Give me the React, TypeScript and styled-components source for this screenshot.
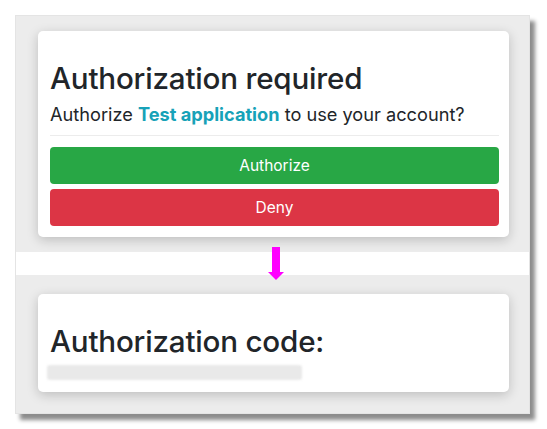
import React from "react";
import styled, { createGlobalStyle } from "styled-components";

const Global = createGlobalStyle`
  html, body { margin: 0; padding: 0; background: #ffffff; }
  body { font-family: Inter, "Noto Sans", "Liberation Sans", sans-serif; color: #212529; }
  * { box-sizing: border-box; }
`;

const Page = styled.div`
  width: 547px;
  height: 429px;
  padding: 15px 0 0 15px;
`;

const Frame = styled.div`
  width: 515px;
  height: 399px;
  border: 1px solid #e4e4e4;
  background: #ffffff;
  box-shadow: 5px 6px 4px rgba(0, 0, 0, 0.45);
  display: flex;
  flex-direction: column;
`;

const Panel = styled.div<{ $h: number; $pt: number }>`
  height: ${(p) => p.$h}px;
  background: #ececec;
  padding: ${(p) => p.$pt}px 20px 0 22px;
`;

const Card = styled.div`
  background: #ffffff;
  border-radius: 5px;
  box-shadow: 0 3px 12px rgba(0, 0, 0, 0.2);
  padding: 12px 10px 11px 12px;
  display: flex;
  flex-direction: column;
`;

const Heading = styled.h1<{ $mt: number }>`
  margin: ${(p) => p.$mt}px 0 0 0;
  font-size: 29.6px;
  font-weight: 500;
  line-height: 36px;
  letter-spacing: -0.2px;
  color: #212529;
`;

const Lead = styled.p`
  margin: 6px 0 0 0;
  font-size: 18.2px;
  line-height: 24px;
  color: #212529;
`;

const AppName = styled.span`
  color: #17a2b8;
  font-weight: 700;
`;

const Rule = styled.hr`
  margin: 9px 0 11px 0;
  border: 0;
  border-top: 1px solid #ececec;
`;

const Buttons = styled.div`
  display: flex;
  flex-direction: column;
  gap: 5px;
`;

const Button = styled.button<{ $bg: string }>`
  height: 37px;
  border: 0;
  border-radius: 4px;
  background: ${(p) => p.$bg};
  color: #ffffff;
  font-family: inherit;
  font-size: 15.5px;
  font-weight: 400;
  cursor: pointer;
`;

const Strip = styled.div`
  position: relative;
  height: 23px;
  background: #ffffff;
`;

const Arrow = styled.svg`
  position: absolute;
  left: 252px;
  top: -5px;
  z-index: 2;
`;

const CodeBar = styled.div`
  margin: 6px 0 1px -3px;
  width: 255px;
  height: 15px;
  background: #e9e9e9;
  border-radius: 3px;
  filter: blur(1.2px);
`;

export default function App() {
  return (
    <>
      <Global />
      <Page>
        <Frame>
          <Panel $h={236} $pt={15}>
            <Card>
              <Heading $mt={17}>Authorization required</Heading>
              <Lead>
                Authorize <AppName>Test application</AppName> to use your account?
              </Lead>
              <Rule />
              <Buttons>
                <Button $bg="#28a745">Authorize</Button>
                <Button $bg="#dc3545">Deny</Button>
              </Buttons>
            </Card>
          </Panel>
          <Strip>
            <Arrow width="16" height="33" viewBox="0 0 16 33">
              <polygon points="4,0 12,0 12,25 16,25 8,33 0,25 4,25" fill="#ff00ff" />
            </Arrow>
          </Strip>
          <Panel $h={138} $pt={19}>
            <Card>
              <Heading $mt={17}>Authorization code:</Heading>
              <CodeBar />
            </Card>
          </Panel>
        </Frame>
      </Page>
    </>
  );
}
